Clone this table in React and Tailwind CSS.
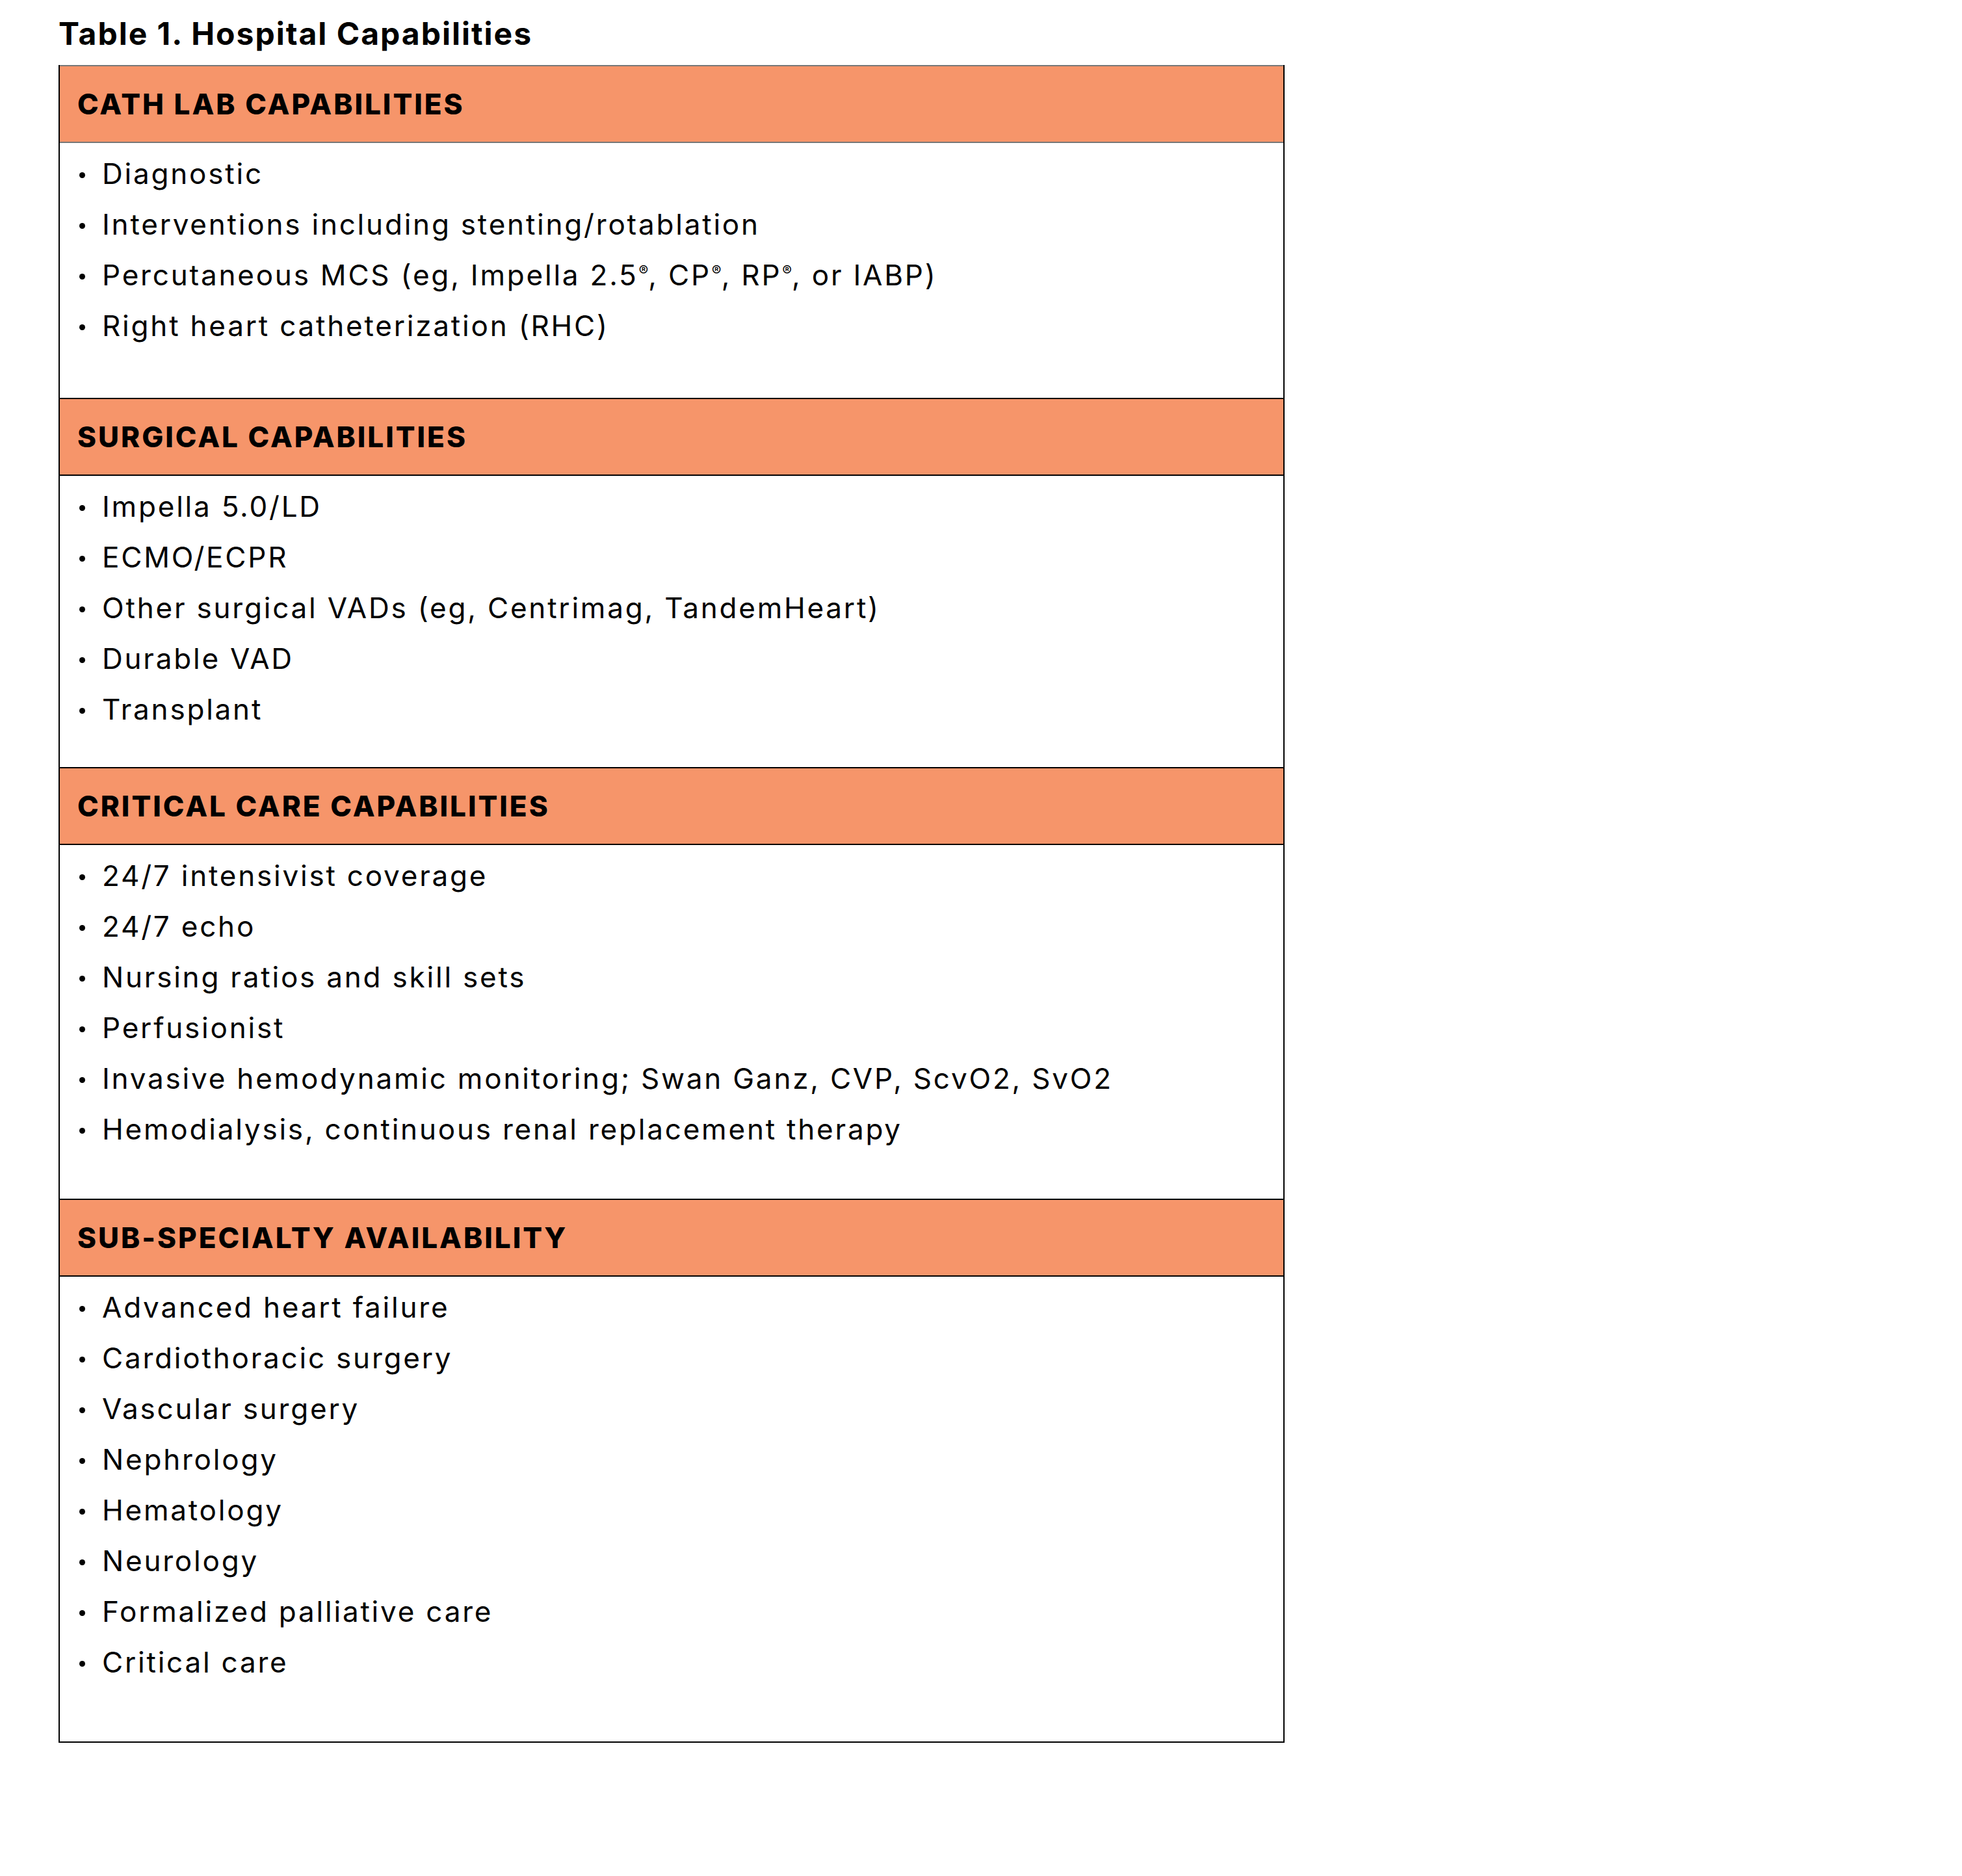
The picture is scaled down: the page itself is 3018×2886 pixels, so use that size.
const sections = [
  {
    title: 'CATH LAB CAPABILITIES',
    pad: 'pb-[72px]',
    items: [
      'Diagnostic',
      'Interventions including stenting/rotablation',
      'percutaneous',
      'Right heart catheterization (RHC)',
    ],
  },
  {
    title: 'SURGICAL CAPABILITIES',
    pad: 'pb-[50px]',
    items: [
      'Impella 5.0/LD',
      'ECMO/ECPR',
      'Other surgical VADs (eg, Centrimag, TandemHeart)',
      'Durable VAD',
      'Transplant',
    ],
  },
  {
    title: 'CRITICAL CARE CAPABILITIES',
    pad: 'pb-[68px]',
    items: [
      '24/7 intensivist coverage',
      '24/7 echo',
      'Nursing ratios and skill sets',
      'Perfusionist',
      'Invasive hemodynamic monitoring; Swan Ganz, CVP, ScvO2, SvO2',
      'Hemodialysis, continuous renal replacement therapy',
    ],
  },
  {
    title: 'SUB-SPECIALTY AVAILABILITY',
    pad: 'pb-[83px]',
    items: [
      'Advanced heart failure',
      'Cardiothoracic surgery',
      'Vascular surgery',
      'Nephrology',
      'Hematology',
      'Neurology',
      'Formalized palliative care',
      'Critical care',
    ],
  },
];

function Reg() {
  return <sup className="text-[22px] -top-[15px] ml-[1px] tracking-normal">®</sup>;
}

function ItemText({ text }) {
  if (text === 'percutaneous') {
    return (
      <span>
        Percutaneous MCS (eg, Impella 2.5<Reg />, CP<Reg />, RP<Reg />, or IABP)
      </span>
    );
  }
  return <span>{text}</span>;
}

export default function App() {
  return (
    <div
      className="w-[3018px] h-[2886px] bg-white text-black pl-[90px] pt-[26px]"
      style={{ fontFamily: 'Inter, "Liberation Sans", sans-serif' }}
    >
      <h1 className="text-[48px] font-bold leading-[52px] tracking-[2px] mb-[22px]">
        Table 1. Hospital Capabilities
      </h1>

      <div className="w-[1886px] border-x-2 border-black border-b-2">
        {sections.map((s, i) => (
          <div key={s.title}>
            <div
              className={
                'h-[120px] bg-[#F6956A] flex items-center pl-[27px] border-y-2 ' +
                (i === 0 ? 'border-[#777777]' : 'border-black')
              }
            >
              <span className="text-[44px] font-extrabold tracking-[3px]">{s.title}</span>
            </div>
            <ul className={'pt-[8px] pl-[30px] ' + s.pad}>
              {s.items.map((it) => (
                <li key={it} className="flex items-center h-[78px] text-[44px] tracking-[2.8px]">
                  <span className="w-[9px] h-[9px] rounded-full bg-black mr-[26px] mt-[4px]" />
                  <ItemText text={it} />
                </li>
              ))}
            </ul>
          </div>
        ))}
      </div>
    </div>
  );
}
